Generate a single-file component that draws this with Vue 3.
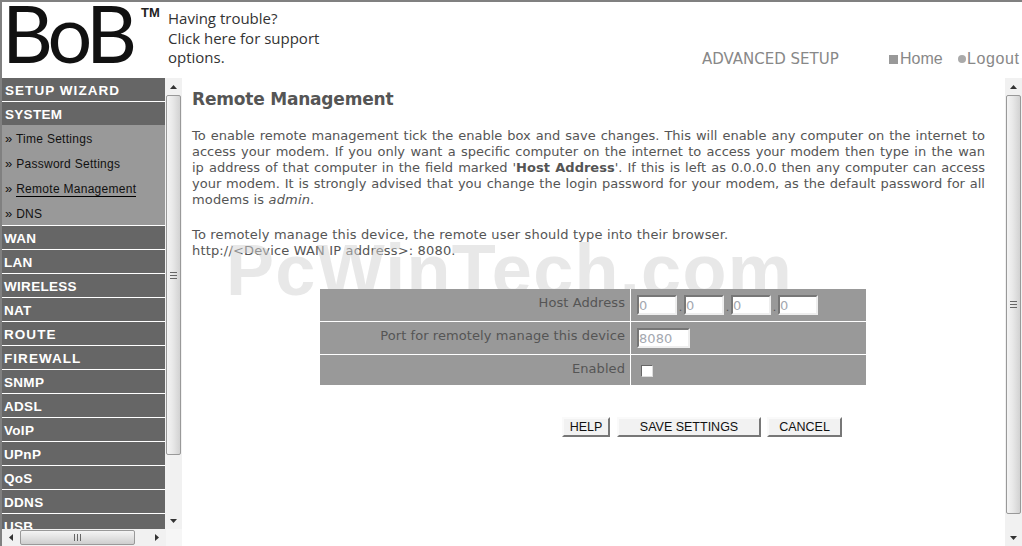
<script setup>
const menuTop = [
  { name: 'SETUP WIZARD', track: 'wide' },
  { name: 'SYSTEM', track: 'tight' }
]
const subItems = ['Time Settings', 'Password Settings', 'Remote Management', 'DNS']
const menuBottom = [
  { name: 'WAN', track: 'tight' },
  { name: 'LAN', track: 'tight' },
  { name: 'WIRELESS', track: 'tight' },
  { name: 'NAT', track: 'tight' },
  { name: 'ROUTE', track: 'wide' },
  { name: 'FIREWALL', track: 'wide' },
  { name: 'SNMP', track: 'tight' },
  { name: 'ADSL', track: 'tight' },
  { name: 'VoIP', track: 'tight' },
  { name: 'UPnP', track: 'tight' },
  { name: 'QoS', track: 'tight' },
  { name: 'DDNS', track: 'tight' },
  { name: 'USB', track: 'tight' }
]
const ipParts = [0, 1, 2, 3]
</script>

<template>
  <div class="page">
    <header class="header">
      <div class="logo">BoB<span class="tm">TM</span></div>
      <div class="support">Having trouble?<br />Click here for support<br />options.</div>
      <div class="topnav">
        <span class="adv">ADVANCED SETUP</span>
        <span class="navlink home"><i class="sq"></i>Home</span>
        <span class="navlink logout"><i class="dot"></i>Logout</span>
      </div>
    </header>
    <div class="body">
      <div class="left-frame">
        <div class="left-top">
          <nav class="menu">
            <div v-for="m in menuTop" :key="m.name" class="mitem first" :class="m.track">{{ m.name }}</div>
            <div class="sub">
              <div v-for="s in subItems" :key="s" class="sitem">
                <span class="raq">»</span> <span :class="{ cur: s === 'Remote Management' }">{{ s }}</span>
              </div>
            </div>
            <div v-for="m in menuBottom" :key="m.name" class="mitem" :class="m.track">{{ m.name }}</div>
          </nav>
          <div class="vbar left-vbar">
            <div class="arrow"><svg width="7" height="4" viewBox="0 0 7 4"><path d="M3.5 0 7 4H0z" fill="#333" /></svg></div>
            <div class="thumb left-thumb"><span class="grip"></span></div>
            <div class="spacer"></div>
            <div class="arrow"><svg width="7" height="4" viewBox="0 0 7 4"><path d="M0 0h7L3.5 4z" fill="#333" /></svg></div>
          </div>
        </div>
        <div class="hbar">
          <div class="harrow"><svg width="4" height="7" viewBox="0 0 4 7"><path d="M4 0v7L0 3.5z" fill="#333" /></svg></div>
          <div class="hthumb"><span class="hgrip"></span></div>
          <div class="spacer"></div>
          <div class="harrow"><svg width="4" height="7" viewBox="0 0 4 7"><path d="M0 0l4 3.5L0 7z" fill="#333" /></svg></div>
          <div class="corner"></div>
        </div>
      </div>
      <main class="content">
        <div class="watermark">PcWinTech.com</div>
        <h1 class="title">Remote Management</h1>
        <div class="para">
          <div class="jl">To enable remote management tick the enable box and save changes. This will enable any computer on the internet to</div>
          <div class="jl">access your modem. If you only want a specific computer on the internet to access your modem then type in the wan</div>
          <div class="jl">ip address of that computer in the field marked '<b>Host Address</b>'. If this is left as 0.0.0.0 then any computer can access</div>
          <div class="jl">your modem. It is strongly advised that you change the login password for your modem, as the default password for all</div>
          <div>modems is <em>admin</em>.</div>
        </div>
        <div class="para second">
          <div>To remotely manage this device, the remote user should type into their browser.</div>
          <div>http://&lt;Device WAN IP address&gt;: 8080.</div>
        </div>
        <div class="form">
          <div class="row r1">
            <div class="lab">Host Address</div>
            <div class="val">
              <template v-for="i in ipParts" :key="i">
                <span v-if="i > 0" class="sep">.</span>
                <span class="inp ip">0</span>
              </template>
            </div>
          </div>
          <div class="row r2">
            <div class="lab">Port for remotely manage this device</div>
            <div class="val"><span class="inp port">8080</span></div>
          </div>
          <div class="row r3">
            <div class="lab">Enabled</div>
            <div class="val"><span class="check"></span></div>
          </div>
        </div>
        <div class="buttons">
          <button class="btn help">HELP</button>
          <button class="btn save">SAVE SETTINGS</button>
          <button class="btn cancel">CANCEL</button>
        </div>
      </main>
      <div class="vbar right-vbar">
        <div class="arrow"><svg width="7" height="4" viewBox="0 0 7 4"><path d="M3.5 0 7 4H0z" fill="#333" /></svg></div>
        <div class="thumb right-thumb"><span class="grip"></span></div>
        <div class="spacer"></div>
        <div class="arrow"><svg width="7" height="4" viewBox="0 0 7 4"><path d="M0 0h7L3.5 4z" fill="#333" /></svg></div>
      </div>
    </div>
  </div>
</template>

<style>
html, body { margin: 0; background: #fff; overflow: hidden; }
</style>

<style scoped>
.page {
  width: 1022px; height: 546px; box-sizing: border-box; display: flex; flex-direction: column;
  border-top: 2px solid #808080; border-left: 2px solid #808080; overflow: hidden; background: #fff;
  font-family: "DejaVu Sans", sans-serif;
}
.header { height: 76px; flex: none; position: relative; display: flex; }
.logo {
  width: 164px; flex: none; box-sizing: border-box; padding-left: 0; position: relative;
  font-family: "Lato", sans-serif; font-size: 79px; line-height: 62px; color: #111; letter-spacing: -5px;
}
.tm {
  position: absolute; left: 139px; top: 5px; font-family: "Liberation Sans", sans-serif;
  font-size: 13px; font-weight: bold; line-height: 12px; letter-spacing: 0; color: #222;
}
.support {
  margin-top: 7px; margin-left: 2px; font-family: "Open Sans", sans-serif; font-size: 15px; line-height: 19.5px; color: #333; width: 200px; flex: none;
}
.topnav { flex: 1; display: flex; align-items: flex-start; padding-top: 47px; color: #888; font-size: 14px; line-height: 20px; }
.adv { margin-left: 334px; width: 187px; flex: none; font-size: 15px; }
.navlink { display: flex; align-items: center; font-size: 16px; font-family: "Liberation Sans", sans-serif; }
.home { width: 58px; flex: none; margin-left: 0; }
.logout { flex: none; margin-left: 11px; letter-spacing: 0.6px; }
.sq { width: 9px; height: 9px; background: #999; margin-right: 2px; }
.dot { width: 8px; height: 8px; border-radius: 50%; background: #aaa; margin-right: 1px; }
.body { flex: 1; min-height: 0; display: flex; }
.left-frame { width: 180px; flex: none; display: flex; flex-direction: column; }
.left-top { flex: 1; min-height: 0; display: flex; }
.menu { width: 163px; flex: none; overflow: hidden; font-family: "Liberation Sans", sans-serif; }
.mitem {
  height: 23px; border-bottom: 1px solid #fff; background: #666; color: #fff; font-weight: bold;
  font-size: 13.5px; line-height: 25px; padding-left: 2px; overflow: hidden;
}
.mitem.first { padding-left: 3px; }
.mitem.wide { letter-spacing: 1.05px; }
.mitem.tight { letter-spacing: 0.3px; }
.sub { height: 100px; background: #999; border-bottom: 1px solid #fff; box-sizing: content-box; margin-top: -1px; }
.sitem { height: 25px; line-height: 28px; font-size: 12px; padding-left: 3px; color: #111; letter-spacing: 0.28px; }
.raq { font-size: 13px; }
.cur { border-bottom: 1px solid #000; }
.vbar { width: 17px; flex: none; display: flex; flex-direction: column; background: #f1f1f1; }
.arrow { height: 17px; display: flex; align-items: center; justify-content: center; flex: none; }
.thumb {
  box-sizing: border-box; width: 15px; margin-left: 1px; flex: none; border: 1px solid #999; border-radius: 2px;
  background: linear-gradient(90deg, #f4f4f4, #e8e8e8 45%, #d2d2d2);
  display: flex; align-items: center; justify-content: center;
}
.left-thumb { height: 360px; }
.right-thumb { height: 419px; }
.grip { width: 7px; height: 7px; background: repeating-linear-gradient(180deg, #666 0 1px, transparent 1px 3px); }
.spacer { flex: 1; }
.hbar { height: 17px; flex: none; display: flex; background: #f1f1f1; align-items: center; }
.harrow { width: 18px; height: 17px; flex: none; display: flex; align-items: center; justify-content: center; }
.hthumb {
  width: 115px; height: 15px; box-sizing: border-box; flex: none; border: 1px solid #999; border-radius: 2px;
  background: linear-gradient(180deg, #f4f4f4, #e4e4e4 45%, #cecece);
  display: flex; align-items: center; justify-content: center;
}
.hgrip { width: 7px; height: 7px; background: repeating-linear-gradient(90deg, #666 0 1px, transparent 1px 3px); }
.corner { width: 16px; height: 17px; flex: none; background: #f6f6f6; }
.content { flex: 1; min-width: 0; position: relative; padding: 0 20px 0 10px; color: #555; font-size: 13px; line-height: 16px; letter-spacing: 0.16px; }
.title { margin: 11px 0 0; font-size: 17px; line-height: 20px; font-weight: bold; color: #555; letter-spacing: -0.2px; }
.para { margin-top: 19px; }
.para.second { margin-top: 19px; }
.jl { text-align: justify; text-align-last: justify; letter-spacing: 0; }
.watermark {
  position: absolute; left: 44px; top: 156px; font-family: "Liberation Sans", sans-serif; font-size: 72px;
  line-height: 72px; font-weight: bold; color: rgba(210, 210, 210, 0.5); white-space: nowrap; letter-spacing: 1.3px;
}
.form { margin: 30px 0 0 128px; width: 546px; background: #999; position: relative; z-index: 1; letter-spacing: 0.08px; }
.row { display: flex; height: 32px; border-bottom: 1px solid #fff; }
.row.r3 { height: 30px; border-bottom: 0; }
.lab { width: 305px; flex: none; text-align: right; padding-top: 6px; color: #555; line-height: 16px; height: auto; box-sizing: border-box; }
.val { flex: 1; border-left: 1px solid #fff; margin-left: 5px; display: flex; padding: 6px 0 0 6px; box-sizing: border-box; }
.inp {
  box-sizing: border-box; height: 20px; background: #fff; border: 2px solid; border-color: #777 #eee #eee #777;
  color: #a4a8b0; font-size: 13px; line-height: 17px; padding-left: 0; display: block;
}
.ip { width: 40px; }
.port { width: 53px; }
.sep { width: 7px; text-align: center; color: #555; line-height: 26px; font-size: 11px; }
.check { width: 12px; height: 12px; box-sizing: border-box; margin: 4px 0 0 4px; background: #fff; border: 1px solid; border-color: #666 #ddd #ddd #666; }
.buttons { display: flex; margin: 32px 0 0 370px; }
.btn {
  height: 20px; box-sizing: border-box; padding: 0; font-family: "Liberation Sans", sans-serif; font-size: 12.5px; color: #111;
  background: #f2f2f2; border: 2px solid; border-color: #fafafa #777 #777 #fafafa; line-height: 16px;
}
.help { width: 48px; }
.save { width: 144px; margin-left: 7px; }
.cancel { width: 75px; margin-left: 6px; }
</style>
